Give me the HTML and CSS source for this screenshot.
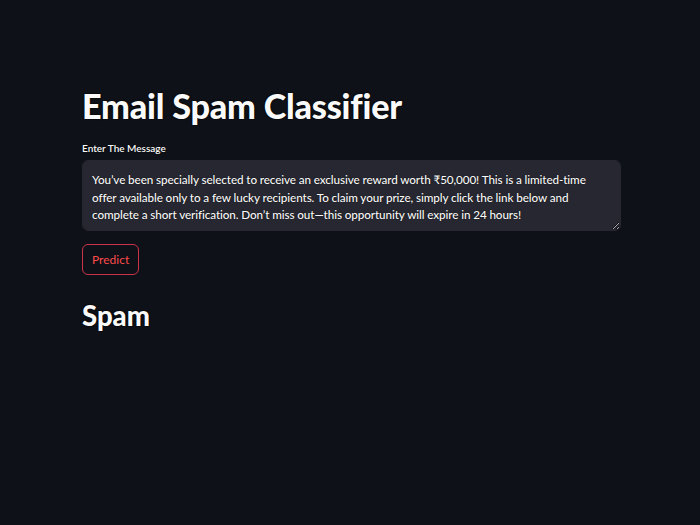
FILE: index.html
```html
<!DOCTYPE html>
<html lang="en">
<head>
<meta charset="utf-8">
<title>Email Spam Classifier</title>
<link rel="stylesheet" href="styles.css">
</head>
<body>
<main class="app">
  <section class="block">
    <h1 class="title">Email Spam Classifier</h1>
    <div class="field">
      <label class="label" for="msg">Enter The Message</label>
      <div class="textarea-wrap">
        <textarea id="msg" class="textarea" rows="3">You’ve been specially selected to receive an exclusive reward worth ₹50,000! This is a limited-time offer available only to a few lucky recipients. To claim your prize, simply click the link below and complete a short verification. Don’t miss out—this opportunity will expire in 24 hours!</textarea>
      </div>
    </div>
    <button class="btn" type="button">Predict</button>
    <h2 class="result">Spam</h2>
  </section>
</main>
</body>
</html>
```

FILE: styles.css
```css
html, body {
  margin: 0;
  padding: 0;
  background: #0e1117;
  color: #fafafa;
  font-family: "Lato", "Noto Sans", sans-serif;
}

.app {
  width: 700px;
  height: 525px;
  box-sizing: border-box;
  padding: 83px 79px 0 82px;
}

.block {
  display: flex;
  flex-direction: column;
  align-items: flex-start;
}

.title {
  margin: 0;
  font-size: 34.2px;
  font-weight: 900;
  line-height: 46px;
  letter-spacing: -0.2px;
  text-shadow: 0 0 2px #000, 0 0 1px #000;
}

.field {
  width: 100%;
  margin-top: 12px;
}

.label {
  display: block;
  font-size: 10px;
  font-weight: 600;
  line-height: 14px;
  margin-bottom: 5px;
  text-shadow: 0 0 1px #000;
}

.textarea-wrap {
  width: 100%;
}

.textarea {
  display: block;
  width: 100%;
  box-sizing: border-box;
  height: 71px;
  background: #262730;
  color: #fafafa;
  border: 1px solid #262730;
  border-radius: 6px;
  padding: 10px 9px 8px;
  font-family: inherit;
  font-size: 11.7px;
  font-weight: 500;
  line-height: 17.5px;
  letter-spacing: -0.1px;
  resize: vertical;
  outline: none;
  text-shadow: 0 0 1px #000;
}

.btn {
  margin-top: 13px;
  height: 31px;
  padding: 0 9px;
  background: #0e1117;
  color: #ff4b4b;
  border: 1px solid #c9344a;
  border-radius: 6px;
  font-family: inherit;
  font-size: 12px;
  font-weight: 400;
}

.result {
  margin: 24px 0 0;
  font-size: 27.5px;
  font-weight: 900;
  line-height: 34px;
  text-shadow: 0 0 2px #000, 0 0 1px #000;
}
```
